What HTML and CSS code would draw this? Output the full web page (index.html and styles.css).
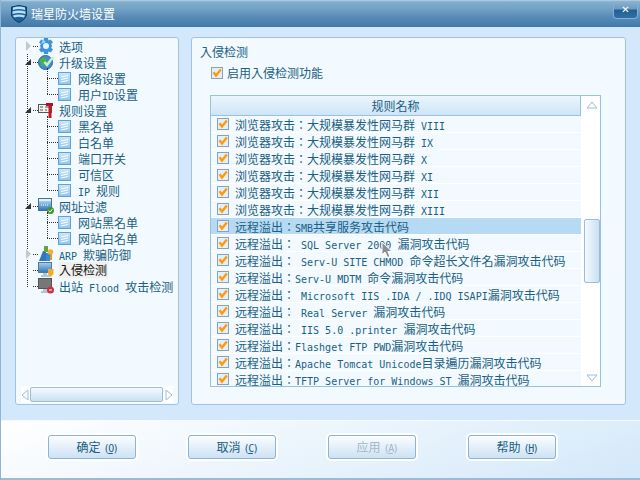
FILE: index.html
```html
<!DOCTYPE html>
<html>
    <head>
        <title>瑞星防火墙设置</title>
        <meta charset="UTF-8">
        <link rel="stylesheet" href="styles.css">
    </head>
    <body>
        <svg class="defs">
            <defs>
                <linearGradient id="docfill" x1="0" y1="0" x2="0" y2="1"><stop offset="0" stop-color="#cfe6f8"/><stop offset="1" stop-color="#8fc4ec"/></linearGradient>
                <linearGradient id="screen" x1="0" y1="0" x2="0" y2="1"><stop offset="0" stop-color="#a8d0ee"/><stop offset="1" stop-color="#2f78b8"/></linearGradient>
                <symbol id="chk" viewBox="0 0 12 12">
                    <rect x=".5" y=".5" width="11" height="11" fill="#e4eff8" stroke="#86a2be"/>
                    <path d="M2.5 5.2 L5 8.5 L9.800 2.500" fill="none" stroke="#ff9a0a" stroke-width="2.400"/>
                </symbol>
                <symbol id="doc" viewBox="0 0 13 13">
                    <rect x=".5" y=".5" width="12" height="12" fill="url(#docfill)" stroke="#5aa3dc"/>
                    <path d="M3 5 L10 3.5 M3 7.5 L10 6 M3 10 L10 8.5" stroke="#fff"/>
                </symbol>
                <symbol id="gear" viewBox="0 0 16 16">
                    <path d="M6 0h4l.5 2.4 2.2-1 2.3 3-1.8 1.6.8 2-.8 2 1.800 1.600-2.300 3-2.200-1L10 16H6l-.5-2.400-2.200 1-2.300-3 1.800-1.600-.8-2 .8-2L1 4.400l2.300-3 2.200 1z" fill="#3d93dc"/>
                    <circle cx="8" cy="8" r="3" fill="#e8f4fc"/>
                    <path d="M5 1.500 L8 4 L3 6z" fill="#9fd2f4"/>
                </symbol>
                <symbol id="globe" viewBox="0 0 16 16">
                    <circle cx="7.500" cy="8.500" r="7" fill="#3c8fd0" stroke="#2a6a9a"/>
                    <path d="M2 5 L7 3 L9 7 L6 12 L3 10z" fill="#4fb04a"/>
                    <path d="M6.500 8 L9 11 L15 3" fill="none" stroke="#cfeec0" stroke-width="2.500"/>
                </symbol>
                <symbol id="rules" viewBox="0 0 16 16">
                    <rect x=".5" y="2.500" width="13" height="8" fill="#f2f2ee" stroke="#555"/>
                    <path d="M2 5h3M2 8h3M7 5h4M7 8h2" stroke="#555"/>
                    <path d="M8 1h7v3H8z" fill="#b0121a"/>
                    <rect x="10.500" y="3" width="3" height="13" fill="#c8161e"/>
                </symbol>
                <symbol id="url" viewBox="0 0 16 16">
                    <rect x=".5" y=".5" width="13" height="12" fill="#e4eef6" stroke="#4a6f90"/>
                    <rect x="1" y="3" width="12" height="9" fill="url(#screen)"/>
                    <path d="M3 7h8" stroke="#fff" stroke-dasharray="1 1"/>
                    <circle cx="12.500" cy="12.500" r="3.500" fill="#3f9a2e"/>
                    <path d="M10.800 12.500 L12.200 14 L14.300 11.200" fill="none" stroke="#fff"/>
                </symbol>
                <symbol id="arp" viewBox="0 0 16 16">
                    <path d="M1 15 L5 5 L8 5 L8 15z" fill="#2f78c0"/>
                    <path d="M6 0h4v6H6z" fill="#64a83a"/>
                    <path d="M8 15V7h4v8z" fill="#3c8ad0"/>
                    <circle cx="12.500" cy="6" r="2.800" fill="#f2b233"/>
                    <path d="M12 8h2v6h-2z" fill="#e89a20"/>
                </symbol>
                <symbol id="mon" viewBox="0 0 16 16">
                    <rect x=".5" y=".5" width="13" height="10" fill="url(#screen)" stroke="#5a7a94"/>
                    <path d="M5 11h4v2H5zM3 13h9v2H3z" fill="#b8c4ce"/>
                    <path d="M10 7h5.500v5L12.700 15 10 12z" fill="#f2ab2e"/>
                </symbol>
                <symbol id="mon2" viewBox="0 0 16 16">
                    <rect x=".5" y=".5" width="13" height="10" fill="#777" stroke="#555"/>
                    <path d="M5 11h4v2H5zM3 13h9v2H3z" fill="#b8c4ce"/>
                    <circle cx="12.500" cy="12" r="3.500" fill="#c8343a"/>
                    <path d="M11 12h3" stroke="#fff"/>
                </symbol>
            </defs>
        </svg>

        <div class="window">
            <div class="titlebar">
                <svg class="logo" viewBox="0 0 16 18">
                    <path d="M.5 2 Q8 -1 15.500 2 V10 Q14 15 8 17.500 Q2 15 .5 10z" fill="#1f5f9c" stroke="#123a60"/>
                    <path d="M2 2.500 Q8 .5 14 2.500 V5 Q8 3 2 5z M1.500 6.500 Q8 4.500 14.500 6.500 V9 Q8 7 1.500 9z M2 10.500 Q8 8.500 14 10.500 L13 12.500 Q8 11 3 12.500z" fill="#b8e0f8"/>
                </svg>
                <span class="title">瑞星防火墙设置</span>
                <div class="close">✕</div>
            </div>

            <div class="main">
                <div class="panel side">
                    <div class="tree">
                        <div class="row"><i class="exp closed"></i><i class="dots"></i><svg class="ico"><use href="#gear"/></svg><span>选项</span></div>
                        <div class="row"><i class="exp open"></i><i class="dots"></i><svg class="ico"><use href="#globe"/></svg><span>升级设置</span></div>
                        <div class="sub h2">
                            <div class="row child"><i class="dots"></i><svg class="leaf"><use href="#doc"/></svg><span>网络设置</span></div>
                            <div class="row child"><i class="dots"></i><svg class="leaf"><use href="#doc"/></svg><span>用户<b class="en">ID</b>设置</span></div>
                        </div>
                        <div class="row"><i class="exp open"></i><i class="dots"></i><svg class="ico"><use href="#rules"/></svg><span>规则设置</span></div>
                        <div class="sub h5">
                            <div class="row child"><i class="dots"></i><svg class="leaf"><use href="#doc"/></svg><span>黑名单</span></div>
                            <div class="row child"><i class="dots"></i><svg class="leaf"><use href="#doc"/></svg><span>白名单</span></div>
                            <div class="row child"><i class="dots"></i><svg class="leaf"><use href="#doc"/></svg><span>端口开关</span></div>
                            <div class="row child"><i class="dots"></i><svg class="leaf"><use href="#doc"/></svg><span>可信区</span></div>
                            <div class="row child"><i class="dots"></i><svg class="leaf"><use href="#doc"/></svg><span><b class="en">IP </b>规则</span></div>
                        </div>
                        <div class="row"><i class="exp open"></i><i class="dots"></i><svg class="ico"><use href="#url"/></svg><span>网址过滤</span></div>
                        <div class="sub h2">
                            <div class="row child"><i class="dots"></i><svg class="leaf"><use href="#doc"/></svg><span>网站黑名单</span></div>
                            <div class="row child"><i class="dots"></i><svg class="leaf"><use href="#doc"/></svg><span>网站白名单</span></div>
                        </div>
                        <div class="row"><i class="exp closed"></i><i class="dots"></i><svg class="ico"><use href="#arp"/></svg><span><b class="en">ARP </b>欺骗防御</span></div>
                        <div class="row"><i class="exp"></i><i class="dots"></i><svg class="ico"><use href="#mon"/></svg><span class="current">入侵检测</span></div>
                        <div class="row"><i class="exp"></i><i class="dots"></i><svg class="ico"><use href="#mon2"/></svg><span>出站<b class="en"> Flood </b>攻击检测</span></div>
                    </div>
                    <div class="hscroll">
                        <svg class="arrow" viewBox="0 0 8 12"><path d="M7 1 L1 6 L7 11z" fill="none" stroke="#9dbcd6"/></svg>
                        <div class="hthumb"></div>
                        <svg class="arrow" viewBox="0 0 8 12"><path d="M1 1 L7 6 L1 11z" fill="none" stroke="#9dbcd6"/></svg>
                    </div>
                </div>

                <div class="panel content">
                    <div class="heading">入侵检测</div>
                    <label class="enable"><svg class="chk"><use href="#chk"/></svg>启用入侵检测功能</label>
                    <div class="list">
                        <div class="cols">
                            <div class="head">规则名称</div>
                            <div class="item"><svg class="chk"><use href="#chk"/></svg><span>浏览器攻击：大规模暴发性网马群<b class="en"> VIII</b></span></div>
                            <div class="item"><svg class="chk"><use href="#chk"/></svg><span>浏览器攻击：大规模暴发性网马群<b class="en"> IX</b></span></div>
                            <div class="item"><svg class="chk"><use href="#chk"/></svg><span>浏览器攻击：大规模暴发性网马群<b class="en"> X</b></span></div>
                            <div class="item"><svg class="chk"><use href="#chk"/></svg><span>浏览器攻击：大规模暴发性网马群<b class="en"> XI</b></span></div>
                            <div class="item"><svg class="chk"><use href="#chk"/></svg><span>浏览器攻击：大规模暴发性网马群<b class="en"> XII</b></span></div>
                            <div class="item"><svg class="chk"><use href="#chk"/></svg><span>浏览器攻击：大规模暴发性网马群<b class="en"> XIII</b></span></div>
                            <div class="item selected"><svg class="chk"><use href="#chk"/></svg><span>远程溢出：<b class="en">SMB</b>共享服务攻击代码</span></div>
                            <div class="item"><svg class="chk"><use href="#chk"/></svg><span>远程溢出：<b class="en"> SQL Server 2000 </b>漏洞攻击代码</span></div>
                            <div class="item"><svg class="chk"><use href="#chk"/></svg><span>远程溢出：<b class="en"> Serv-U SITE CHMOD </b>命令超长文件名漏洞攻击代码</span></div>
                            <div class="item"><svg class="chk"><use href="#chk"/></svg><span>远程溢出：<b class="en">Serv-U MDTM </b>命令漏洞攻击代码</span></div>
                            <div class="item"><svg class="chk"><use href="#chk"/></svg><span>远程溢出：<b class="en"> Microsoft IIS .IDA / .IDQ ISAPI</b>漏洞攻击代码</span></div>
                            <div class="item"><svg class="chk"><use href="#chk"/></svg><span>远程溢出：<b class="en"> Real Server </b>漏洞攻击代码</span></div>
                            <div class="item"><svg class="chk"><use href="#chk"/></svg><span>远程溢出：<b class="en"> IIS 5.0 .printer </b>漏洞攻击代码</span></div>
                            <div class="item"><svg class="chk"><use href="#chk"/></svg><span>远程溢出：<b class="en">Flashget FTP PWD</b>漏洞攻击代码</span></div>
                            <div class="item"><svg class="chk"><use href="#chk"/></svg><span>远程溢出：<b class="en">Apache Tomcat Unicode</b>目录遍历漏洞攻击代码</span></div>
                            <div class="item"><svg class="chk"><use href="#chk"/></svg><span>远程溢出：<b class="en">TFTP Server for Windows ST </b>漏洞攻击代码</span></div>
                        </div>
                        <div class="vscroll">
                            <svg class="varrow" viewBox="0 0 12 8"><path d="M1 7 L6 1 L11 7z" fill="none" stroke="#9dbcd6"/></svg>
                            <div class="vthumb"></div>
                            <svg class="varrow" viewBox="0 0 12 8"><path d="M1 1 L6 7 L11 1z" fill="none" stroke="#9dbcd6"/></svg>
                        </div>
                    </div>
                </div>
            </div>

            <div class="footer">
                <div class="btn">确定<b class="en">(<u>O</u>)</b></div>
                <div class="btn">取消<b class="en">(<u>C</u>)</b></div>
                <div class="btn disabled">应用<b class="en">(<u>A</u>)</b></div>
                <div class="btn">帮助<b class="en">(<u>H</u>)</b></div>
            </div>
        </div>

        <svg class="cursor" viewBox="0 0 13 18"><path d="M1 1 V14 L4 11 L6.500 16.500 L9 15.500 L6.800 10.500 H11z" fill="#8a8f96" stroke="#fff"/></svg>
    </body>
</html>
```

FILE: styles.css
```css
html, body {
    margin: 0;
    padding: 0;
}

body {
    width: 640px;
    height: 480px;
    overflow: hidden;
    position: relative;
    font: 12px "Noto Sans CJK TC", "Noto Sans CJK SC", sans-serif;
    color: #1b5f82;
}

/* only holds the symbols, must stay rendered or the gradients are lost */
.defs {
    position: absolute;
    width: 0;
    height: 0;
}

.en {
    font: 10px "DejaVu Sans Mono", monospace;
    white-space: pre;
}

.window {
    width: 640px;
    height: 480px;
    display: flex;
    flex-direction: column;
    background-color: #d3e8fa;
    box-sizing: border-box;
    border-left: 1px solid #8fb4d4;
}

.titlebar {
    height: 27px;
    flex: none;
    display: flex;
    align-items: center;
    padding-left: 10px;
    background: linear-gradient(#b5d2e6 0, #82aecd 2px, #6f9fc4 10px, #5a8db8 16px, #457cab 26px, #3f75a3 27px);
}

.logo {
    width: 16px;
    height: 18px;
    margin-right: 4px;
}

.title {
    color: #fff;
    font-size: 12px;
    line-height: 27px;
}

.close {
    margin-left: auto;
    margin-right: 2px;
    margin-bottom: 8px;
    width: 25px;
    height: 18px;
    box-sizing: border-box;
    border: 1px solid #7fb0d6;
    border-top: none;
    border-radius: 0 0 4px 4px;
    background: linear-gradient(#8db4d0 0, #6c9ac0 8px, #235f94 9px, #2f6fa6 17px);
    color: #fff;
    font: bold 10px/17px "DejaVu Sans", sans-serif;
    text-align: center;
}

.main {
    flex: 1;
    display: flex;
    padding: 10px 14px 15px 14px;
    gap: 12px;
    min-height: 0;
}

.panel {
    background-color: #f2faff;
    border: 1px solid #a3c2dc;
    border-radius: 3px;
    box-sizing: border-box;
}

.side {
    width: 164px;
    display: flex;
    flex-direction: column;
}

.tree {
    flex: 1;
    position: relative;
    padding: 0 0 0 9px;
}

/* long dotted line down the first level */
.tree::before {
    content: "";
    position: absolute;
    left: 11px;
    top: 16px;
    height: 233px;
    border-left: 1px dotted #333;
}

.row {
    height: 16px;
    display: flex;
    align-items: center;
    white-space: nowrap;
}

.exp {
    width: 7px;
    height: 10px;
    flex: none;
    position: relative;
    margin-right: 1px;
}

.exp.closed {
    background: #f2faff;
}

.exp.closed::after {
    content: "";
    position: absolute;
    left: 1px;
    top: 0;
    border-left: 5px solid #c4c8cc;
    border-top: 5px solid transparent;
    border-bottom: 5px solid transparent;
}

.exp.open::after {
    content: "";
    position: absolute;
    left: 0;
    top: 2px;
    border-right: 6px solid #333;
    border-top: 6px solid transparent;
}

.dots {
    width: 5px;
    flex: none;
    border-top: 1px dotted #333;
}

.ico {
    width: 16px;
    height: 16px;
    flex: none;
    margin-right: 5px;
}

.current {
    color: #111;
    background-color: #f0f0ee;
    padding-right: 1px;
    line-height: 16px;
}

.sub {
    position: relative;
}

.sub::before {
    content: "";
    position: absolute;
    left: 22px;
    top: -2px;
    border-left: 1px dotted #333;
}

.sub.h2::before {
    height: 26px;
}

.sub.h5::before {
    height: 74px;
}

.child {
    padding-left: 22px;
}

.child .dots {
    width: 11px;
}

.leaf {
    width: 13px;
    height: 13px;
    flex: none;
    margin-right: 7px;
}

.hscroll {
    height: 17px;
    margin: 0 5px 1px 5px;
    display: flex;
    align-items: center;
    background-color: #fff;
}

.arrow {
    width: 8px;
    height: 12px;
    flex: none;
}

.hthumb {
    flex: 1;
    height: 15px;
    margin: 0 2px 0 1px;
    box-sizing: border-box;
    border: 1px solid #9dbcd6;
    border-radius: 2px;
    background: linear-gradient(#f4fafe, #c9e0f2);
}

.content {
    width: 435px;
    padding: 5px 0 0 8px;
}

.heading {
    line-height: 17px;
}

.enable {
    display: flex;
    align-items: center;
    gap: 4px;
    margin: 6px 0 0 11px;
    line-height: 14px;
}

.chk {
    width: 12px;
    height: 12px;
    flex: none;
}

.list {
    width: 391px;
    height: 292px;
    margin: 15px 0 0 10px;
    display: flex;
    box-sizing: border-box;
    border: 1px solid #97c3e2;
    background-color: #fff;
}

.cols {
    width: 370px;
    overflow: hidden;
}

.head {
    height: 20px;
    box-sizing: border-box;
    background: linear-gradient(#eaf5fc, #cfe5f7);
    border-bottom: 1px solid #97c3e2;
    border-right: 1px solid #97c3e2;
    text-align: center;
    line-height: 19px;
}

.item {
    height: 16px;
    margin-bottom: 1px;
    display: flex;
    align-items: center;
    gap: 6px;
    padding-left: 6px;
    background-color: #f2faff;
    white-space: nowrap;
}

.item.selected {
    background-color: #b7daf4;
}

.vscroll {
    flex: 1;
    display: flex;
    flex-direction: column;
    align-items: center;
    padding: 5px 0 4px 2px;
}

.varrow {
    width: 12px;
    height: 8px;
    flex: none;
}

.vthumb {
    width: 16px;
    height: 64px;
    margin-top: 110px;
    margin-bottom: auto;
    box-sizing: border-box;
    border: 1px solid #9dbcd6;
    border-radius: 2px;
    background: linear-gradient(90deg, #f4fafe, #c9e0f2);
}

.footer {
    height: 60px;
    flex: none;
    box-sizing: border-box;
    padding: 14px 0 0 47px;
    display: flex;
    align-items: flex-start;
    gap: 52px;
    border-top: 1px solid #f4fbff;
    border-bottom: 2px solid #9cbad4;
    background: linear-gradient(160deg, #fff, #eaf4fc 50%, #d3e8fa);
}

.btn {
    width: 88px;
    height: 24px;
    box-sizing: border-box;
    padding-left: 10px;
    border: 1px solid #8fb3d3;
    border-radius: 3px;
    box-shadow: 0 0 0 2px #fff;
    background: linear-gradient(#fbfdff, #cde2f4);
    text-align: center;
    line-height: 22px;
}

.btn .en {
    letter-spacing: -1.4px;
    margin-left: 3px;
}

.btn.disabled {
    color: #a3b8c8;
}

.cursor {
    position: absolute;
    left: 381px;
    top: 241px;
    width: 13px;
    height: 18px;
}
```
